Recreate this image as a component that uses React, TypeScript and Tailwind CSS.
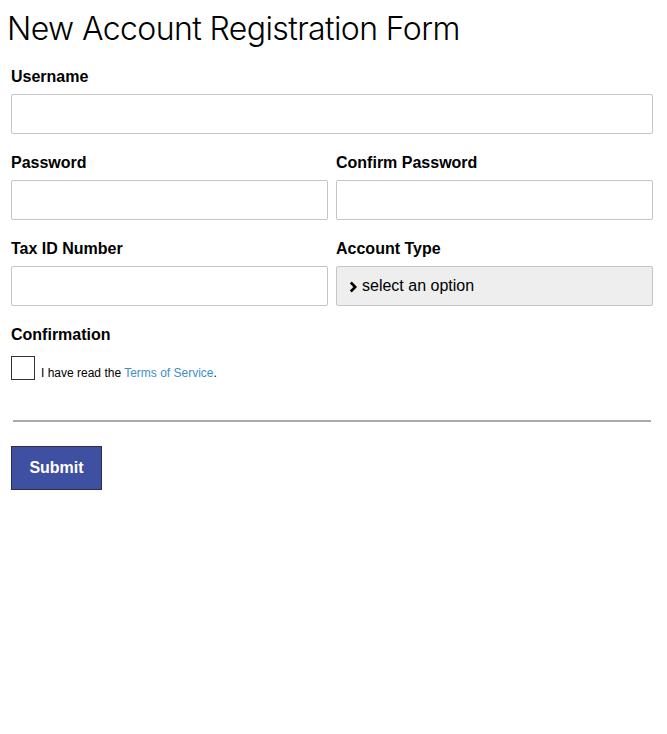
import React from "react";

const Label = ({ children }: { children: React.ReactNode }) => (
  <div className="h-5 mb-2 pt-px text-[16px] leading-[19px] font-bold text-black">{children}</div>
);

const Input = () => (
  <input className="block w-full h-10 border border-[#c5c5c5] rounded-[2px] bg-white px-2 outline-none" />
);

export default function App() {
  return (
    <div className="min-h-[734px] bg-white text-black" style={{ fontFamily: '"Liberation Sans", Arial, sans-serif' }}>
      <h1 className="pl-[7px] pt-[10px] text-[32px] leading-[38px] tracking-[-0.6px]" style={{ fontFamily: 'Inter, "Liberation Sans", sans-serif', fontWeight: 300 }}>
        New Account Registration Form
      </h1>
      <div className="px-[11px] pt-[18px] w-[664px]">
        <div className="mb-[18px]">
          <Label>Username</Label>
          <Input />
        </div>
        <div className="grid grid-cols-2 gap-x-2 mb-[18px]">
          <div>
            <Label>Password</Label>
            <Input />
          </div>
          <div>
            <Label>Confirm Password</Label>
            <Input />
          </div>
        </div>
        <div className="grid grid-cols-2 gap-x-2 mb-[18px]">
          <div>
            <Label>Tax ID Number</Label>
            <Input />
          </div>
          <div>
            <Label>Account Type</Label>
            <div className="h-10 border border-[#c5c5c5] rounded-[2px] bg-[#eeeeee] flex items-center pl-[12px] text-[16px]">
              <svg width="9" height="12" viewBox="0 0 9 12" className="mr-[4px] mt-[1px]">
                <path d="M1.8 1.5 L6.2 6 L1.8 10.5" fill="none" stroke="#000" strokeWidth="2.6" />
              </svg>
              <span>select an option</span>
            </div>
          </div>
        </div>
        <div>
          <Label>Confirmation</Label>
          <div className="flex items-end mt-[12px]">
            <div className="w-6 h-6 border border-[#333] bg-white"></div>
            <span className="ml-[6px] text-[12px] leading-[14px]">
              I have read the <a className="text-[#3d8ec9]">Terms of Service</a>.
            </span>
          </div>
        </div>
        <div className="mt-[40px] mx-[2px] h-[2px] bg-[#aaaaaa]"></div>
        <button className="mt-[24px] w-[91px] h-[44px] bg-[#3f4fa1] border border-[#2b2f4a] text-white font-bold text-[16px]">
          Submit
        </button>
      </div>
    </div>
  );
}
